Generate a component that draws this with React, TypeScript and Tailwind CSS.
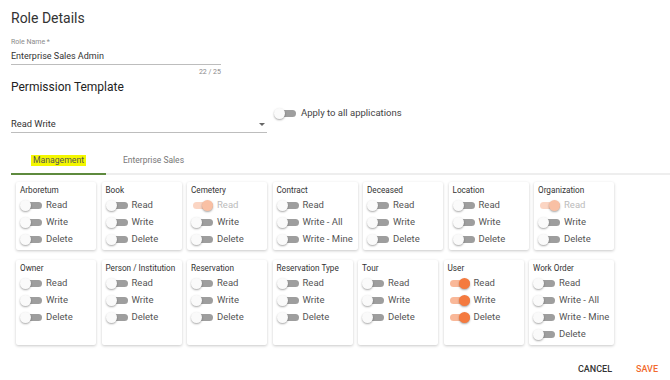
import React from "react";

type Perm = { label: string; on?: boolean; disabled?: boolean };
type Card = { title: string; perms: Perm[]; wide?: boolean };

const rwd = (): Perm[] => [{ label: "Read" }, { label: "Write" }, { label: "Delete" }];

const row1: Card[] = [
  { title: "Arboretum", perms: rwd() },
  { title: "Book", perms: rwd() },
  { title: "Cemetery", perms: [{ label: "Read", on: true, disabled: true }, { label: "Write" }, { label: "Delete" }] },
  { title: "Contract", perms: [{ label: "Read" }, { label: "Write - All" }, { label: "Write - Mine" }], wide: true },
  { title: "Deceased", perms: rwd() },
  { title: "Location", perms: rwd() },
  { title: "Organization", perms: [{ label: "Read", on: true, disabled: true }, { label: "Write" }, { label: "Delete" }] },
];

const row2: Card[] = [
  { title: "Owner", perms: rwd() },
  { title: "Person / Institution", perms: rwd() },
  { title: "Reservation", perms: rwd() },
  { title: "Reservation Type", perms: rwd() },
  { title: "Tour", perms: rwd() },
  { title: "User", perms: [{ label: "Read", on: true }, { label: "Write", on: true }, { label: "Delete", on: true }] },
  { title: "Work Order", perms: [{ label: "Read" }, { label: "Write - All" }, { label: "Write - Mine" }, { label: "Delete" }], wide: true },
];

function Switch({ on, disabled }: { on?: boolean; disabled?: boolean }) {
  const track = on ? (disabled ? "bg-[#fbd5c3]" : "bg-[#f9b899]") : "bg-[#9e9e9e]";
  const thumb = on ? (disabled ? "bg-[#f9c0a4]" : "bg-[#f47a3f]") : "bg-[#fafafa]";
  return (
    <span className="relative inline-block w-[22px] h-[11px] shrink-0">
      <span className={`absolute left-[2px] right-0 top-[2px] h-[7px] rounded-full ${track}`} />
      <span
        className={`absolute top-0 w-[11px] h-[11px] rounded-full ${thumb} ${on ? "right-0" : "left-0"} shadow-[0_1px_2px_rgba(0,0,0,0.35)]`}
      />
    </span>
  );
}

function PermCard({ card }: { card: Card }) {
  return (
    <div className={`bg-white shadow-[0_1px_3px_rgba(0,0,0,0.22)] rounded-[2px] px-[4px] pt-[3px] pb-[2px] ${card.wide ? "w-[85px]" : "w-[80px]"}`}>
      <div className="text-[8.2px] leading-[11px] text-[#333] whitespace-nowrap mb-[1px]">{card.title}</div>
      <div className="flex flex-col">
        {card.perms.map((p) => (
          <div key={p.label} className="flex items-center h-[17px] gap-[4px]">
            <Switch on={p.on} disabled={p.disabled} />
            <span className={`text-[9.5px] whitespace-nowrap ${p.disabled ? "text-[#bbb]" : "text-[#555]"}`}>{p.label}</span>
          </div>
        ))}
      </div>
    </div>
  );
}

export default function App() {
  return (
    <div className="w-[670px] h-[380px] bg-white overflow-hidden font-['Roboto',sans-serif] text-[#333]">
      <div className="pl-[11px] pt-[7px]">
        <div className="text-[14px] leading-[22px] text-[#333]">Role Details</div>
        <div className="w-[210px] mt-[9px]">
          <div className="text-[7px] leading-[9px] text-[#8a8a8a]">Role Name *</div>
          <div className="text-[9px] leading-[14px] mt-[2px] pb-[1px] text-[#333] border-b border-[#bdbdbd]">Enterprise Sales Admin</div>
          <div className="text-[7px] leading-[9px] text-right text-[#8a8a8a] mt-[3px]">22 / 25</div>
        </div>
        <div className="text-[12px] leading-[16px] mt-[2px] text-[#222]">Permission Template</div>
        <div className="flex items-start">
          <div className="w-[256px] mt-[21px] relative flex items-center border-b border-[#bdbdbd] h-[17px]">
            <span className="text-[9.3px] text-[#333]">Read Write</span>
            <span className="absolute right-[2px] top-[7px] w-0 h-0 border-l-[3px] border-r-[3px] border-t-[3px] border-l-transparent border-r-transparent border-t-[#666]" />
          </div>
          <div className="flex items-center ml-[7px] gap-[5px] mt-[12px] h-[12px]">
            <Switch />
            <span className="text-[9.5px] text-[#444]">Apply to all applications</span>
          </div>
        </div>
        <div className="flex mt-[14px] border-b-2 border-[#eeeeee]">
          <div className="w-[95px] h-[26px] flex items-center justify-center relative">
            <span className="text-[8.7px] text-[#555] bg-[#f4f700] px-[2px] leading-[11px]">Management</span>
            <span className="absolute left-0 right-0 bottom-[-2px] h-[2px] bg-[#5e8a3e]" />
          </div>
          <div className="w-[95px] h-[26px] flex items-center justify-center">
            <span className="text-[8.5px] text-[#777]">Enterprise Sales</span>
          </div>
        </div>
        <div className="pl-[5px] pt-[7px] flex flex-col gap-[10px]">
          <div className="flex gap-[5.5px]">
            {row1.map((c) => (
              <PermCard key={c.title} card={c} />
            ))}
          </div>
          <div className="flex gap-[5.5px]">
            {row2.map((c) => (
              <PermCard key={c.title} card={c} />
            ))}
          </div>
        </div>
        <div className="flex justify-end items-center pr-[12px] mt-[19px] gap-[24px] h-[12px]">
          <span className="text-[9px] font-medium text-[#333]">CANCEL</span>
          <span className="text-[9px] font-medium text-[#f26a2e]">SAVE</span>
        </div>
      </div>
    </div>
  );
}
